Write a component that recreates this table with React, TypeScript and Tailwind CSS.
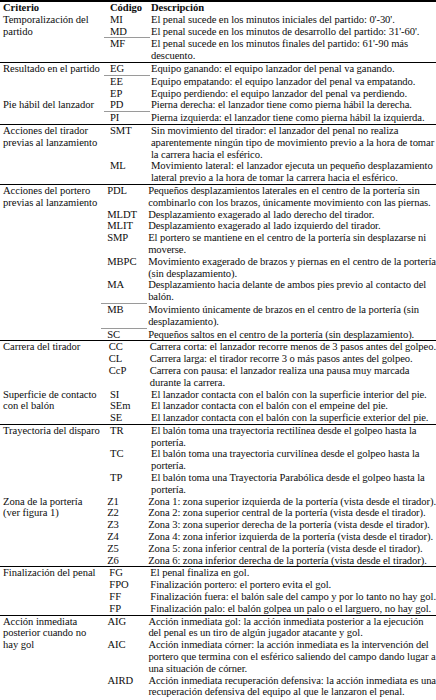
type Row = { code: string; desc: string[]; gray?: boolean }
type Sub = { label: string[]; rows: Row[] }
type Block = { subs: Sub[] }

const blocks: Block[] = [
  {
    subs: [
      {
        label: ['Temporalización del', 'partido'],
        rows: [
          { code: 'MI', desc: ["El penal sucede en los minutos iniciales del partido: 0'-30'."] },
          { code: 'MD', desc: ["El penal sucede en los minutos de desarrollo del partido: 31'-60'."] },
          { code: 'MF', gray: true, desc: ["El penal sucede en los minutos finales del partido: 61'-90 más", 'descuento.'] },
        ],
      },
    ],
  },
  {
    subs: [
      {
        label: ['Resultado en el partido'],
        rows: [
          { code: 'EG', desc: ['Equipo ganando: el equipo lanzador del penal va ganando.'] },
          { code: 'EE', gray: true, desc: ['Equipo empatando: el equipo lanzador del penal va empatando.'] },
          { code: 'EP', desc: ['Equipo perdiendo: el equipo lanzador del penal va perdiendo.'] },
        ],
      },
      {
        label: ['Pie hábil del lanzador'],
        rows: [
          { code: 'PD', desc: ['Pierna derecha: el lanzador tiene como pierna hábil la derecha.'] },
          { code: 'PI', gray: true, desc: ['Pierna izquierda: el lanzador tiene como pierna hábil la izquierda.'] },
        ],
      },
    ],
  },
  {
    subs: [
      {
        label: ['Acciones del tirador', 'previas al lanzamiento'],
        rows: [
          {
            code: 'SMT',
            desc: [
              'Sin movimiento del tirador: el lanzador del penal no realiza',
              'aparentemente ningún tipo de movimiento previo a la hora de tomar',
              'la carrera hacia el esférico.',
            ],
          },
          {
            code: 'ML',
            desc: [
              'Movimiento lateral: el lanzador ejecuta un pequeño desplazamiento',
              'lateral previo a la hora de tomar la carrera hacia el esférico.',
            ],
          },
        ],
      },
    ],
  },
  {
    subs: [
      {
        label: ['Acciones del portero', 'previas al lanzamiento'],
        rows: [
          {
            code: 'PDL',
            desc: [
              'Pequeños desplazamientos laterales en el centro de la portería sin',
              'combinarlo con los brazos, únicamente movimiento con las piernas.',
            ],
          },
          { code: 'MLDT', desc: ['Desplazamiento exagerado al lado derecho del tirador.'] },
          { code: 'MLIT', desc: ['Desplazamiento exagerado al lado izquierdo del tirador.'] },
          {
            code: 'SMP',
            desc: ['El portero se mantiene en el centro de la portería sin desplazarse ni', 'moverse.'],
          },
          {
            code: 'MBPC',
            desc: ['Movimiento exagerado de brazos y piernas en el centro de la portería', '(sin desplazamiento).'],
          },
          {
            code: 'MA',
            desc: ['Desplazamiento hacia delante de ambos pies previo al contacto del', 'balón.'],
          },
          {
            code: 'MB',
            gray: true,
            desc: ['Movimiento únicamente de brazos en el centro de la portería (sin', 'desplazamiento).'],
          },
          {
            code: 'SC',
            gray: true,
            desc: ['Pequeños saltos en el centro de la portería (sin desplazamiento).'],
          },
        ],
      },
    ],
  },
  {
    subs: [
      {
        label: ['Carrera del tirador'],
        rows: [
          { code: 'CC', desc: ['Carrera corta: el lanzador recorre menos de 3 pasos antes del golpeo.'] },
          { code: 'CL', desc: ['Carrera larga: el tirador recorre 3 o más pasos antes del golpeo.'] },
          {
            code: 'CcP',
            desc: ['Carrera con pausa: el lanzador realiza una pausa muy marcada', 'durante la carrera.'],
          },
        ],
      },
      {
        label: ['Superficie de contacto', 'con el balón'],
        rows: [
          { code: 'SI', desc: ['El lanzador contacta con el balón con la superficie interior del pie.'] },
          { code: 'SEm', desc: ['El lanzador contacta con el balón con el empeine del pie.'] },
          { code: 'SE', desc: ['El lanzador contacta con el balón con la superficie exterior del pie.'] },
        ],
      },
    ],
  },
  {
    subs: [
      {
        label: ['Trayectoria del disparo'],
        rows: [
          { code: 'TR', desc: ['El balón toma una trayectoria rectilínea desde el golpeo hasta la', 'portería.'] },
          { code: 'TC', desc: ['El balón toma una trayectoria curvilínea desde el golpeo hasta la', 'portería.'] },
          { code: 'TP', desc: ['El balón toma una Trayectoria Parabólica desde el golpeo hasta la', 'portería.'] },
        ],
      },
      {
        label: ['Zona de la portería', '(ver figura 1)'],
        rows: [
          { code: 'Z1', desc: ['Zona 1: zona superior izquierda de la portería (vista desde el tirador).'] },
          { code: 'Z2', desc: ['Zona 2: zona superior central de la portería (vista desde el tirador).'] },
          { code: 'Z3', desc: ['Zona 3: zona superior derecha de la portería (vista desde el tirador).'] },
          { code: 'Z4', desc: ['Zona 4: zona inferior izquierda de la portería (vista desde el tirador).'] },
          { code: 'Z5', desc: ['Zona 5: zona inferior central de la portería (vista desde el tirador).'] },
          { code: 'Z6', desc: ['Zona 6: zona inferior derecha de la portería (vista desde el tirador).'] },
        ],
      },
    ],
  },
  {
    subs: [
      {
        label: ['Finalización del penal'],
        rows: [
          { code: 'FG', desc: ['El penal finaliza en gol.'] },
          { code: 'FPO', desc: ['Finalización portero: el portero evita el gol.'] },
          { code: 'FF', desc: ['Finalización fuera: el balón sale del campo y por lo tanto no hay gol.'] },
          { code: 'FP', desc: ['Finalización palo: el balón golpea un palo o el larguero, no hay gol.'] },
        ],
      },
    ],
  },
  {
    subs: [
      {
        label: ['Acción inmediata', 'posterior cuando no', 'hay gol'],
        rows: [
          {
            code: 'AIG',
            desc: [
              'Acción inmediata gol: la acción inmediata posterior a la ejecución',
              'del penal es un tiro de algún jugador atacante y gol.',
            ],
          },
          {
            code: 'AIC',
            desc: [
              'Acción inmediata córner: la acción inmediata es la intervención del',
              'portero que termina con el esférico saliendo del campo dando lugar a',
              'una situación de córner.',
            ],
          },
          {
            code: 'AIRD',
            desc: [
              'Acción inmediata recuperación defensiva: la acción inmediata es una',
              'recuperación defensiva del equipo al que le lanzaron el penal.',
            ],
          },
        ],
      },
    ],
  },
]

const Lines = ({ lines }: { lines: string[] }) => (
  <>
    {lines.map((l, i) => (
      <div key={i} className="whitespace-nowrap">
        {l}
      </div>
    ))}
  </>
)

export default function App() {
  return (
    <div className="w-[436px] h-[700px] overflow-hidden bg-white text-[#0d0d0d] text-[10.6px] tracking-[-0.05px] leading-[11.8px] font-['Liberation_Serif','Times_New_Roman',serif]">
      <div className="border-t-2 border-black">
        {/* header */}
        <div className="flex font-bold">
          <div className="w-[104px] pl-[3px]">Criterio</div>
          <div className="w-[46px] pl-[6px]">Código</div>
          <div className="flex-1 pl-[1px]">Descripción</div>
        </div>

        {blocks.map((block, bi) => (
          <div key={bi} className={bi > 0 ? 'border-t border-black' : ''}>
            {block.subs.map((sub, si) => (
              <div key={si} className="flex">
                <div className="w-[104px] pl-[3px]">
                  <Lines lines={sub.label} />
                </div>
                <div className="flex-1">
                  {sub.rows.map((row) => (
                    <div key={row.code} className="flex">
                      <div className={`w-[46px] pl-[6px] ${row.gray ? 'border-t border-[#9a9a9a]' : ''}`}>
                        {row.code}
                      </div>
                      <div className={`flex-1 min-w-0 pl-[1px] tracking-[-0.08px] ${row.gray ? 'pt-px' : ''}`}>
                        <Lines lines={row.desc} />
                      </div>
                    </div>
                  ))}
                </div>
              </div>
            ))}
          </div>
        ))}

        <div className="w-[100px] border-t border-[#bdbdbd] mt-[2px]" />
      </div>
    </div>
  )
}
